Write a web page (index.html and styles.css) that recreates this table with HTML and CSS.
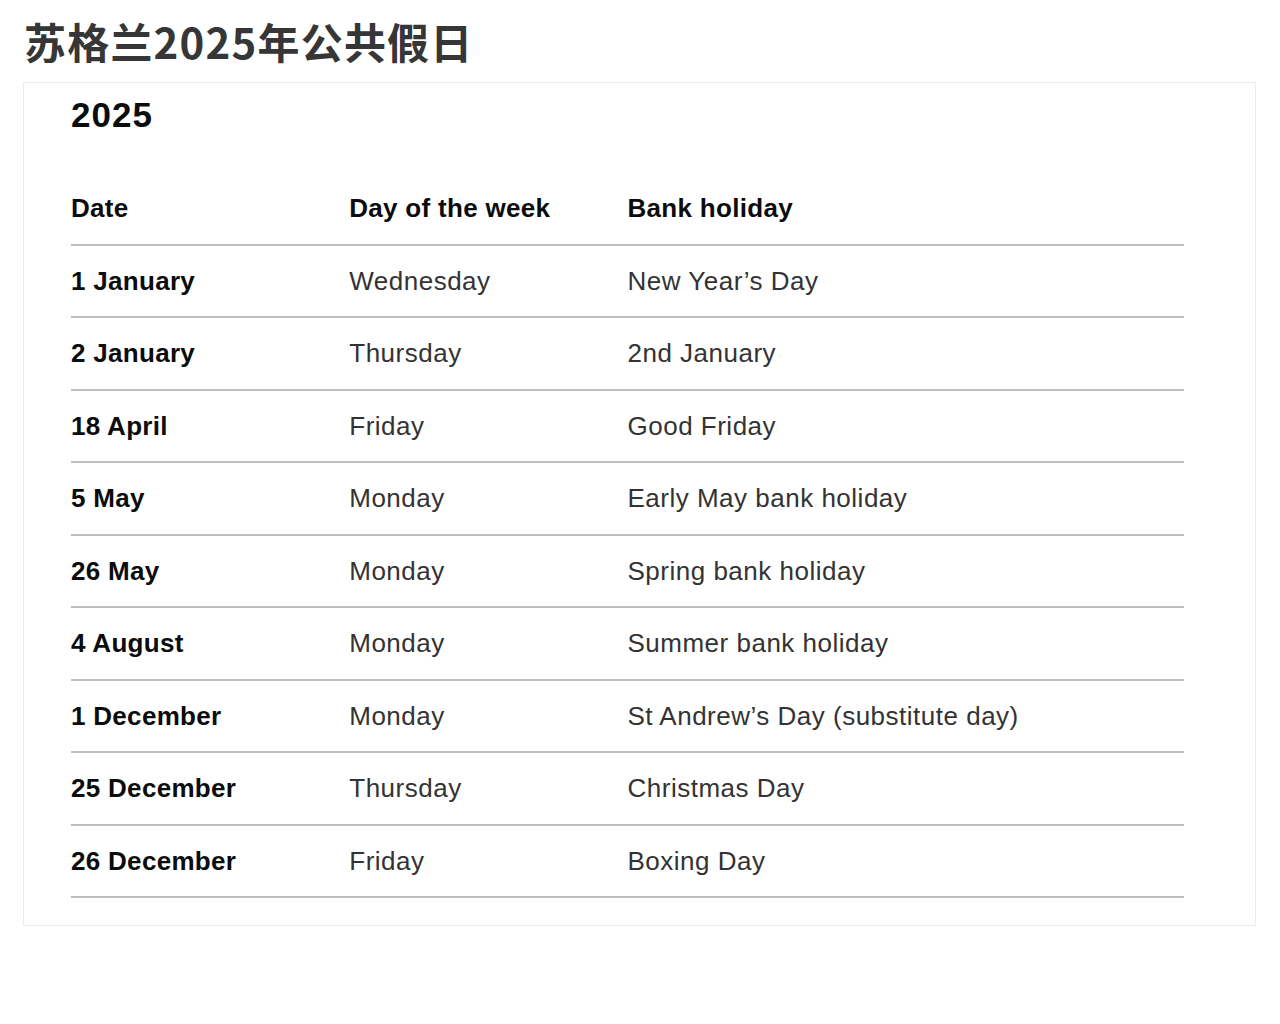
FILE: index.html
```html
<!DOCTYPE html>
<html lang="zh-CN">
<head>
<meta charset="utf-8">
<title>苏格兰2025年公共假日</title>
<link rel="stylesheet" href="styles.css">
</head>
<body>
<main class="page">
  <h1 class="page-title">苏格兰2025年公共假日</h1>
  <section class="card">
    <table class="holidays">
      <caption class="holidays-caption">2025</caption>
      <colgroup>
        <col class="col-date">
        <col class="col-day">
        <col class="col-name">
      </colgroup>
      <thead>
        <tr>
          <th>Date</th>
          <th>Day of the week</th>
          <th>Bank holiday</th>
        </tr>
      </thead>
      <tbody>
        <tr><th>1 January</th><td>Wednesday</td><td>New Year’s Day</td></tr>
        <tr><th>2 January</th><td>Thursday</td><td>2nd January</td></tr>
        <tr><th>18 April</th><td>Friday</td><td>Good Friday</td></tr>
        <tr><th>5 May</th><td>Monday</td><td>Early May bank holiday</td></tr>
        <tr><th>26 May</th><td>Monday</td><td>Spring bank holiday</td></tr>
        <tr><th>4 August</th><td>Monday</td><td>Summer bank holiday</td></tr>
        <tr><th>1 December</th><td>Monday</td><td>St Andrew’s Day (substitute day)</td></tr>
        <tr><th>25 December</th><td>Thursday</td><td>Christmas Day</td></tr>
        <tr><th>26 December</th><td>Friday</td><td>Boxing Day</td></tr>
      </tbody>
    </table>
  </section>
</main>
</body>
</html>
```

FILE: styles.css
```css
html, body {
  margin: 0;
  padding: 0;
  background: #ffffff;
}

.page {
  padding: 0 24px 0 23px;
  font-family: "Liberation Sans", Arial, sans-serif;
}

.page-title {
  margin: 16px 0 16px 1px;
  font-family: "Noto Sans CJK SC", "Noto Sans", sans-serif;
  font-weight: 700;
  font-size: 42px;
  line-height: 50px;
  letter-spacing: 1.2px;
  color: #363636;
}

.card {
  border: 1px solid #ececec;
  padding: 10px 71px 27px 47px;
}

.holidays {
  width: 100%;
  border-collapse: collapse;
  table-layout: fixed;
}

.col-date { width: 25%; }
.col-day { width: 25%; }
.col-name { width: 50%; }

.holidays-caption {
  text-align: left;
  font-weight: 700;
  font-size: 35px;
  line-height: 44px;
  letter-spacing: 1px;
  color: #0b0c0c;
  margin-bottom: 36px;
}

.holidays th,
.holidays td {
  padding: 19px 0;
  font-size: 26px;
  line-height: 32.5px;
  text-align: left;
  vertical-align: middle;
  border-bottom: 2px solid #bcbec0;
}

.holidays th {
  font-weight: 700;
  color: #0b0c0c;
  letter-spacing: 0.3px;
}

.holidays td {
  font-weight: 400;
  color: #333333;
  letter-spacing: 0.5px;
}
```
